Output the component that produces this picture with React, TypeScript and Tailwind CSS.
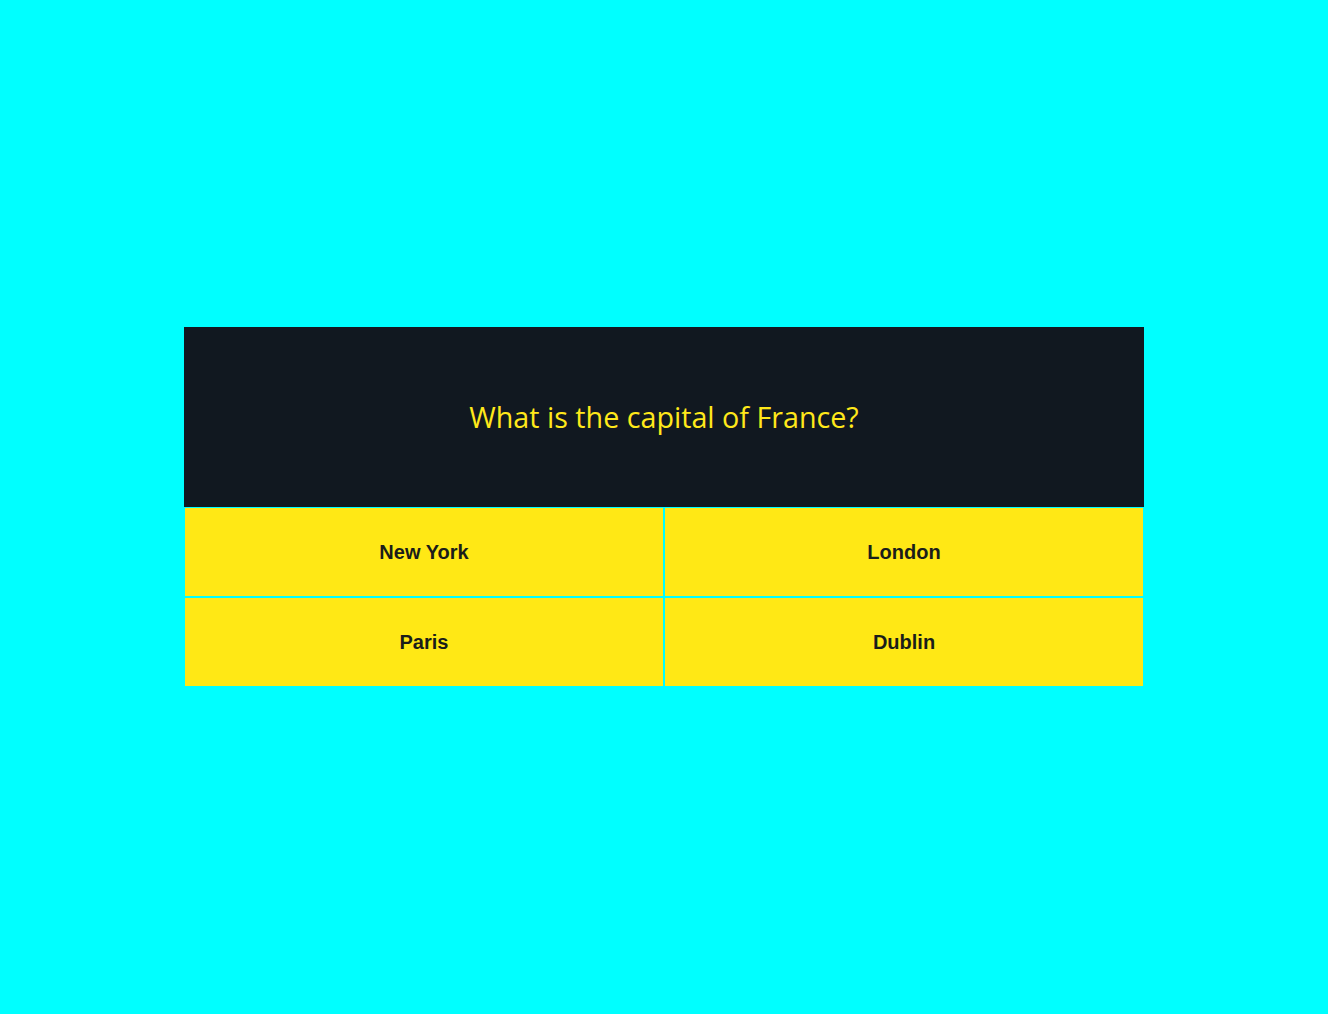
import React from "react";

const answers = ["New York", "London", "Paris", "Dublin"];

export default function App() {
    return (
        <div className="min-h-screen w-full bg-[#00ffff] flex items-center justify-center">
            <div className="w-[960px]">
                {/* Question */}
                <div className="h-[180px] bg-[#111820] flex items-center justify-center">
                    <h1
                        className="text-[28.7px] text-[#ffe81a]"
                        style={{ fontFamily: '"Open Sans", sans-serif' }}
                    >
                        What is the capital of France?
                    </h1>
                </div>

                {/* Answers */}
                <div className="grid grid-cols-2 gap-0.5 p-px">
                    {answers.map((answer) => (
                        <button
                            key={answer}
                            className="h-[88px] bg-[#ffe815] text-[20px] font-bold text-[#1a1d1a]"
                            style={{ fontFamily: '"Liberation Sans", Arial, sans-serif' }}
                        >
                            {answer}
                        </button>
                    ))}
                </div>
            </div>
        </div>
    );
}
